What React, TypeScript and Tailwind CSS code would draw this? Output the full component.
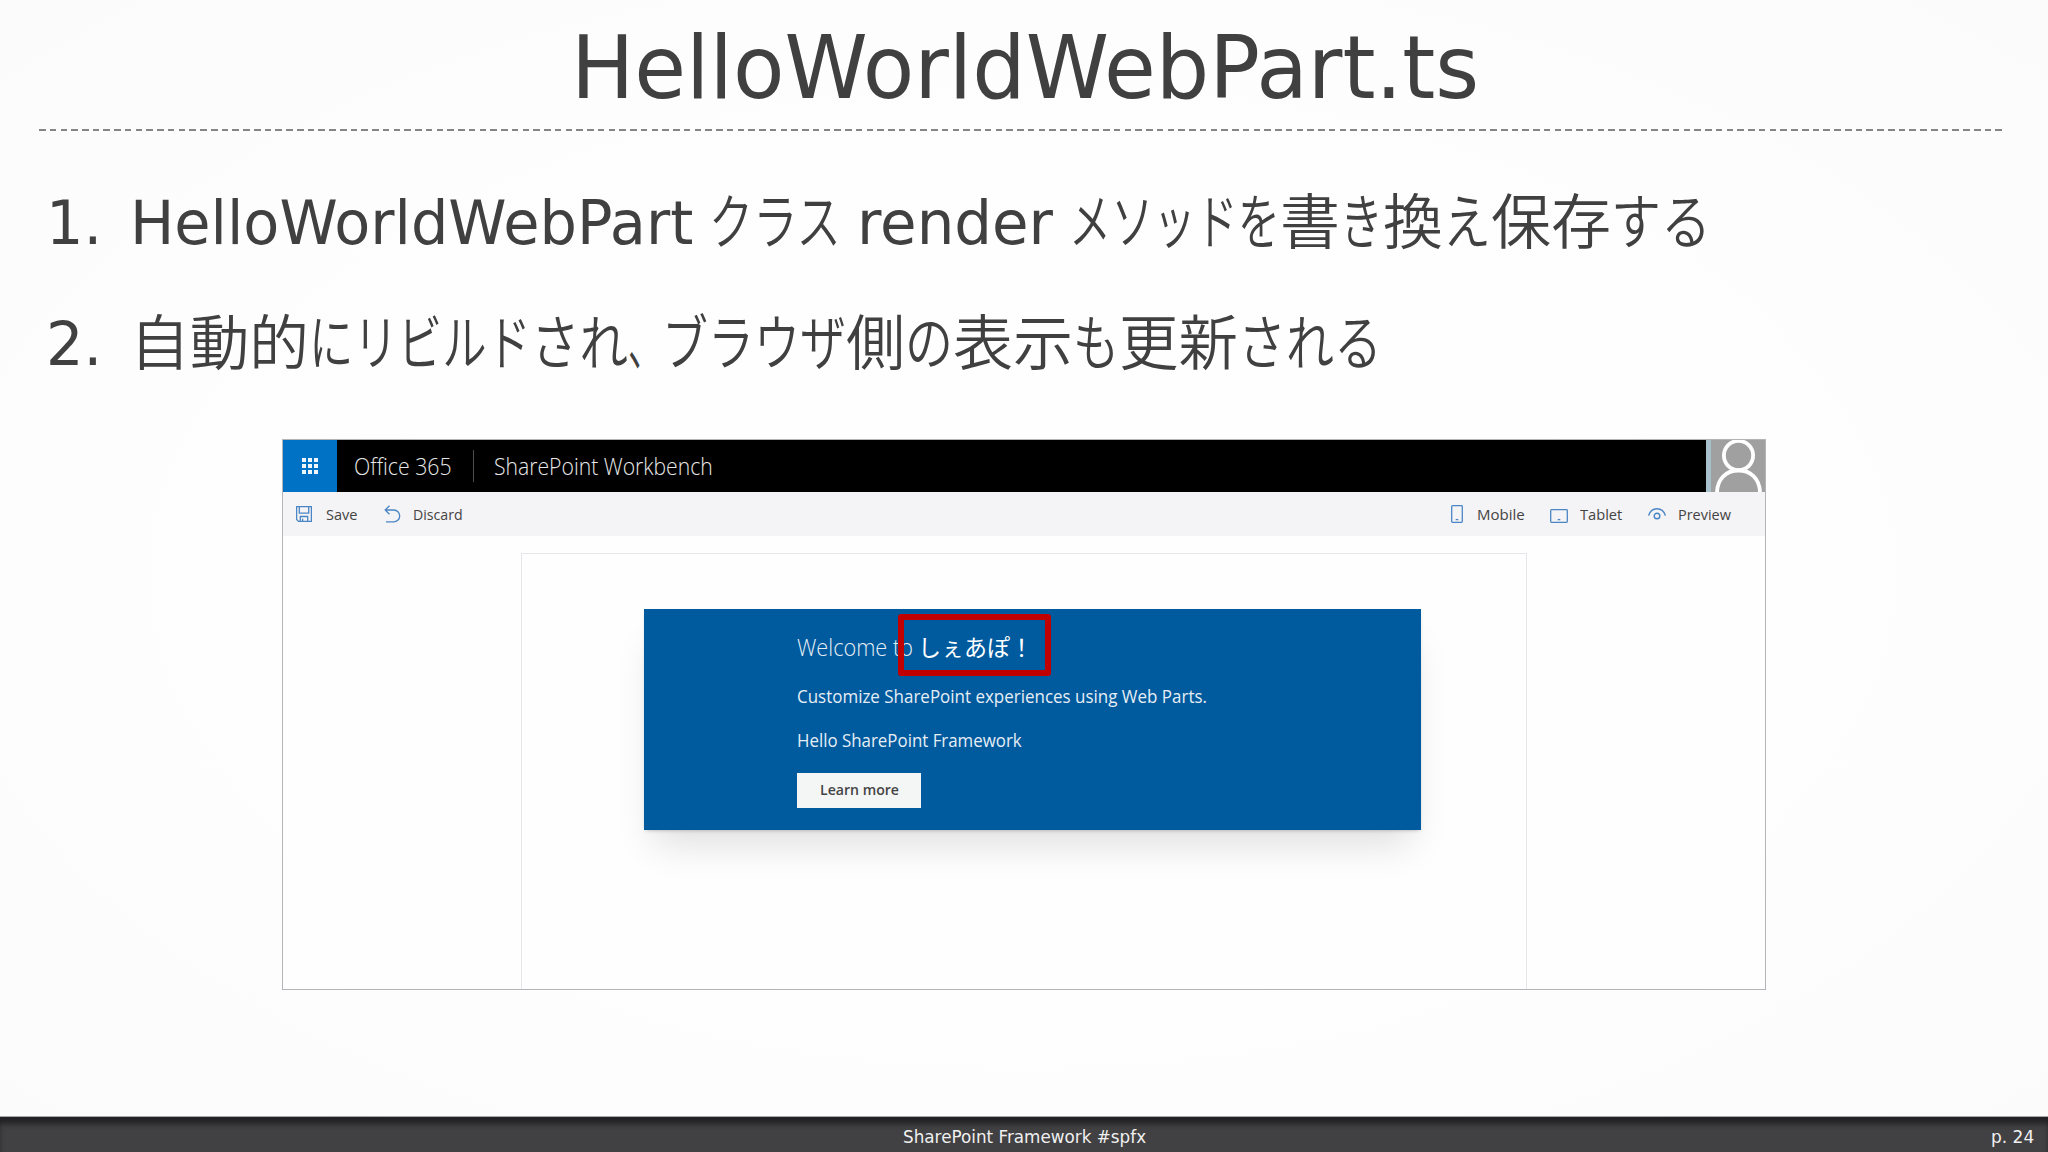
import React, { useLayoutEffect, useRef, useState } from "react";

interface FitProps {
  w: number;
  className?: string;
  children: React.ReactNode;
}

// A run of text condensed or widened to a given advance width
function Fit({ w, className = "", children }: FitProps) {
  const ref = useRef<HTMLSpanElement>(null);
  const [scale, setScale] = useState(1);

  useLayoutEffect(() => {
    if (ref.current) setScale(w / ref.current.offsetWidth);
  }, [w]);

  return (
    <span className={`block shrink-0 ${className}`} style={{ width: w }}>
      <span
        ref={ref}
        className="inline-block origin-left whitespace-pre"
        style={{ transform: `scaleX(${scale})` }}
      >
        {children}
      </span>
    </span>
  );
}

type Run = { text: string; w: number; latin?: boolean; gap?: boolean };

const steps: Run[][] = [
  [
    { text: "HelloWorldWebPart", w: 563, latin: true },
    { text: "クラス", w: 132, gap: true },
    { text: "render", w: 196, latin: true, gap: true },
    { text: "メソッドを", w: 211, gap: true },
    { text: "書", w: 60 },
    { text: "き", w: 43 },
    { text: "換", w: 60 },
    { text: "え", w: 48 },
    { text: "保存", w: 120 },
    { text: "する", w: 100 },
  ],
  [
    { text: "自動的", w: 179 },
    { text: "にリビルド", w: 222 },
    { text: "され", w: 97 },
    { text: "、", w: 34 },
    { text: "ブラウザ", w: 184 },
    { text: "側", w: 59 },
    { text: "の", w: 48 },
    { text: "表示", w: 120 },
    { text: "も", w: 46 },
    { text: "更新", w: 119 },
    { text: "される", w: 144 },
  ],
];

function SaveIcon() {
  return (
    <svg width="16" height="16" viewBox="0 0 16 16" fill="none" stroke="#4a86c5" strokeWidth="1.3">
      <path d="M.6.6h14.8v14.8H2.6l-2-2z" />
      <path d="M3.3.6v6.6h9.4V.6M4.3 15.4v-4.9h7.4v4.9M6.6 15.4v-2.6" />
    </svg>
  );
}

function UndoIcon() {
  return (
    <svg width="17" height="18" viewBox="0 0 17 18" fill="none" stroke="#4a86c5" strokeWidth="1.3">
      <path d="M5.5.8 1.2 5l4.3 4.2M1.2 5h8.6a5.8 5.8 0 0 1 0 11.8H2" />
    </svg>
  );
}

function MobileIcon() {
  return (
    <svg width="12" height="18" viewBox="0 0 12 18" fill="none" stroke="#4a86c5" strokeWidth="1.3">
      <rect x=".7" y=".7" width="10.6" height="16.6" rx=".8" />
      <path d="M4.7 14.6h2.6" />
    </svg>
  );
}

function TabletIcon() {
  return (
    <svg width="18" height="14" viewBox="0 0 18 14" fill="none" stroke="#4a86c5" strokeWidth="1.3">
      <rect x=".7" y=".7" width="16.6" height="12.6" rx=".8" />
      <path d="M7.7 10.6h2.6" />
    </svg>
  );
}

function PreviewIcon() {
  return (
    <svg width="18" height="12" viewBox="0 0 18 12" fill="none" stroke="#4a86c5" strokeWidth="1.4">
      <path d="M.6 7.6C2 3.2 5.2.8 9 .8s7 2.4 8.4 6.8" />
      <circle cx="9" cy="8" r="2.8" />
    </svg>
  );
}

function Workbench() {
  return (
    <div className="ml-[282px] flex h-[551px] w-[1484px] flex-col overflow-hidden border border-[#b4b3b8] bg-[#fefefe] font-['Open_Sans','Noto_Sans_CJK_JP',sans-serif]">
      {/* Suite bar */}
      <div className="flex h-[52px] shrink-0 bg-black text-[23px] leading-[52px] font-light text-[#e8e8e8]">
        <div className="flex w-[54px] items-center justify-center bg-[#0072c6]">
          <div className="grid grid-cols-3 gap-[2px]">
            {Array.from({ length: 9 }).map((_, i) => (
              <span key={i} className="h-1 w-1 bg-[#eef6fc]" />
            ))}
          </div>
        </div>
        <Fit w={98} className="ml-[17px]">Office 365</Fit>
        <div className="mt-[10px] ml-[21px] h-[32px] w-px bg-[#4d4d4d]" />
        <Fit w={219} className="ml-[20px]">SharePoint Workbench</Fit>
        <div className="ml-auto h-full w-[5px] bg-[#a9c0cd]" />
        <svg width="54" height="52" viewBox="0 0 54 52" className="bg-[#a0a0a0]" fill="none" stroke="#fff" strokeWidth="3.8">
          <circle cx="27.5" cy="15.5" r="14.6" />
          <path d="M6 52C6.5 39 15 30.5 27.5 30.5S48.5 39 49 52" />
        </svg>
      </div>

      {/* Command bar */}
      <div className="flex h-[44px] shrink-0 items-center bg-[#f4f3f5] text-[15px] leading-[44px] text-[#444]">
        <div className="ml-[13px]"><SaveIcon /></div>
        <Fit w={31} className="ml-[14px]">Save</Fit>
        <div className="ml-[27px]"><UndoIcon /></div>
        <Fit w={50} className="ml-[12px]">Discard</Fit>
        <div className="ml-auto"><MobileIcon /></div>
        <Fit w={48} className="ml-[14px]">Mobile</Fit>
        <div className="mt-[3px] ml-[25px]"><TabletIcon /></div>
        <Fit w={42} className="ml-[12px]">Tablet</Fit>
        <div className="ml-[26px]"><PreviewIcon /></div>
        <Fit w={53} className="mr-[34px] ml-[12px]">Preview</Fit>
      </div>

      {/* Canvas */}
      <div className="mt-[17px] ml-[238px] w-[1006px] flex-1 border border-b-0 border-[#e6e5ea] pt-[55px] pl-[122px]">
        <div className="h-[221px] w-[777px] bg-[#005a9e] pl-[153px] text-[#e6eef5] shadow-[0_2px_4px_-2px_rgba(0,0,0,0.3),0_25px_36px_-10px_rgba(20,0,20,0.12)]">
          <div className="relative flex h-[74px] pt-[18px] text-[23px] leading-[40px] font-light">
            <Fit w={116}>Welcome to</Fit>
            <Fit w={115} className="ml-[5px] font-normal text-white">しぇあぽ！</Fit>
            <div className="absolute top-[5px] left-[101px] h-[62px] w-[153px] rounded-[3px] border-[6px] border-[#c00000]" />
          </div>
          <Fit w={410} className="h-[44px] text-[18px] leading-[26px]">Customize SharePoint experiences using Web Parts.</Fit>
          <Fit w={225} className="h-[46px] text-[18px] leading-[26px]">Hello SharePoint Framework</Fit>
          <div className="flex h-[35px] w-[124px] justify-center bg-[#f4f6f6] text-[15px] leading-[33px] font-semibold text-[#444]">
            <Fit w={79}>Learn more</Fit>
          </div>
        </div>
      </div>
    </div>
  );
}

export default function App() {
  return (
    <main className="flex h-[1152px] w-[2048px] flex-col overflow-hidden bg-[radial-gradient(ellipse_at_center,#fefefe_40%,#fdfdfd_70%,#fbfbfc_100%)] font-['DejaVu_Sans','Noto_Sans_CJK_JP',sans-serif] text-[#404040]">
      {/* Slide title */}
      <header className="flex h-[129px] shrink-0 pl-[571px] text-[88px] leading-[136px]">
        <Fit w={908}>HelloWorldWebPart.ts</Fit>
      </header>
      <div className="ml-[39px] h-[2px] w-[1967px] shrink-0 bg-[repeating-linear-gradient(90deg,#858585_0_6.5px,transparent_6.5px_10.75px)]" />

      {/* Steps */}
      <ol className="flex h-[308px] shrink-0 flex-col pt-[32px] text-[60px]">
        {steps.map((runs, i) => (
          <li key={i} className="flex h-[121px] shrink-0 pl-[46px] leading-[121px]">
            <Fit w={56} className="mr-[28px]">{`${i + 1}.`}</Fit>
            {runs.map((run, j) => (
              <React.Fragment key={j}>
                {run.gap && <span className="w-4" />}
                <Fit
                  w={run.w}
                  className={run.latin ? "" : "font-['Noto_Sans_CJK_JP',sans-serif] leading-[110px] font-[350]"}
                >
                  {run.text}
                </Fit>
              </React.Fragment>
            ))}
          </li>
        ))}
      </ol>

      <Workbench />

      {/* Footer */}
      <footer className="mt-auto grid h-[36px] shrink-0 grid-cols-3 border-t border-[#a8a7ab] bg-[#414042] text-[17px] leading-[41px] text-[#f0f0f0] shadow-[inset_0_8px_5px_-1px_#232224]">
        <span />
        <div className="flex pl-[220px]">
          <Fit w={243}>SharePoint Framework #spfx</Fit>
        </div>
        <div className="flex justify-end pr-[14px]">
          <Fit w={43}>p. 24</Fit>
        </div>
      </footer>
    </main>
  );
}
